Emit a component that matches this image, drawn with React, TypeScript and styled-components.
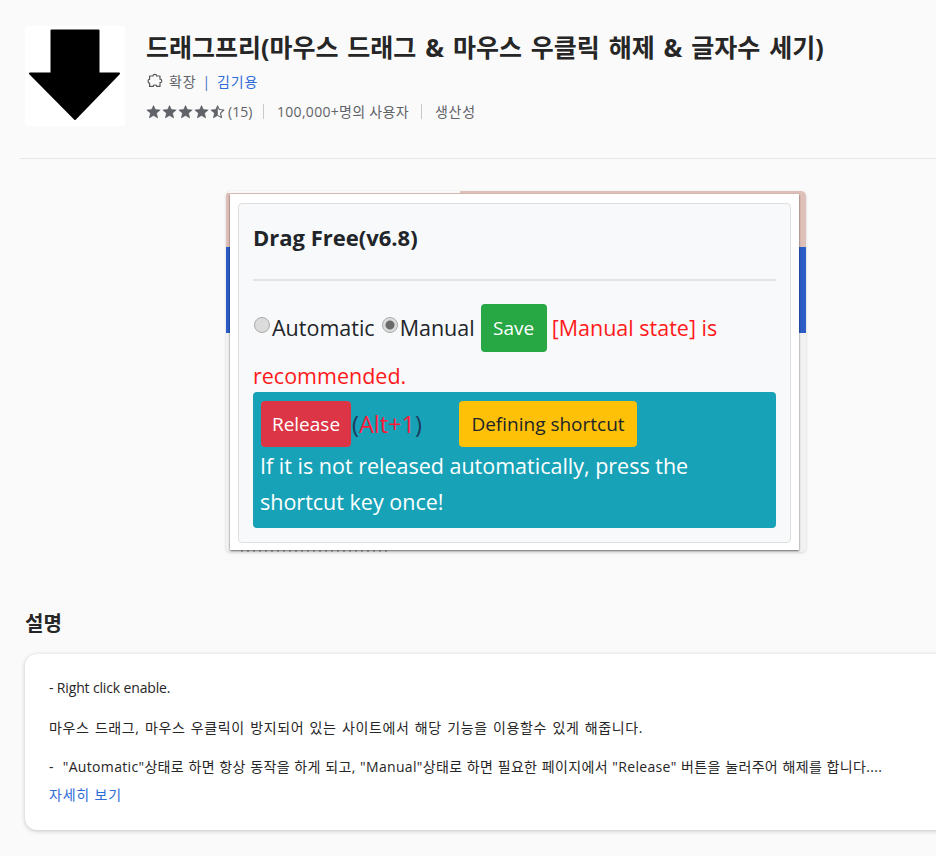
import React from 'react';
import styled, { createGlobalStyle } from 'styled-components';

const Global = createGlobalStyle`
  html, body { margin: 0; padding: 0; background: #fafafa; }
  body { font-family: "Open Sans", "Noto Sans CJK KR", sans-serif; }
`;

const Page = styled.div`
  width: 936px;
  height: 856px;
  overflow: hidden;
  background: #fafafa;
`;

const Header = styled.header`
  margin-left: 20px;
  height: 158px;
  border-bottom: 1px solid #e6e6e6;
  display: flex;
  align-items: flex-start;
  padding-left: 5px;
`;

const Logo = styled.div`
  width: 100px;
  height: 100px;
  margin-top: 26px;
  background: #fff;
  border-radius: 4px;
  flex: none;
`;

const HeaderInfo = styled.div`
  margin-left: 21px;
  display: flex;
  flex-direction: column;
  white-space: nowrap;
`;

const Title = styled.h1`
  margin: 29px 0 0;
  font-size: 25px;
  line-height: 36px;
  font-weight: 700;
  color: #262626;
  font-family: "Open Sans", "Noto Sans CJK KR", sans-serif;
  word-spacing: 2.4px;
`;

const MetaRow = styled.div`
  display: flex;
  align-items: center;
  height: 20px;
  font-size: 14px;
  color: #5f6368;
`;

const TypeRow = styled(MetaRow)`
  margin-top: 6px;
  padding-left: 1px;
  gap: 6px;
`;

const RatingRow = styled(MetaRow)`
  margin-top: 10px;
`;

const KoreanLabel = styled.span`
  letter-spacing: 0.8px;
`;

const Pipe = styled.span`
  color: #3f6fc4;
`;

const Publisher = styled.a`
  color: #2f6bd8;
  margin-left: 1px;
  letter-spacing: 0.8px;
`;

const Stars = styled.div`
  display: flex;
  gap: 1px;
`;

const Count = styled.span`
  margin-left: 3px;
  width: 23px;
`;

const UserCount = styled.span`
  letter-spacing: 0.3px;
`;

const RowDivider = styled.span`
  width: 1px;
  height: 15px;
  background: #c8c8c8;
  margin: 0 13px 0 12px;
`;

const ShotRow = styled.div`
  display: flex;
  justify-content: flex-start;
  padding: 32px 0 0 226px;
`;

const Shot = styled.div`
  width: 580px;
  height: 361px;
  box-sizing: border-box;
  padding: 3px 7px 2px 4px;
  overflow: hidden;
  border-radius: 5px;
  position: relative;
  box-shadow: 0 1px 3px rgba(0, 0, 0, 0.16);
  background: linear-gradient(
    to bottom,
    #dfc0b8 0,
    #dfc0b8 56px,
    #2c5cc5 56px,
    #2c5cc5 142px,
    #f2f2f2 142px
  );
`;

const ShotTopNotch = styled.span`
  position: absolute;
  left: 0;
  top: 0;
  width: 234px;
  height: 2px;
  background: #fafafa;
`;

const ShotBottomResidue = styled.span`
  position: absolute;
  left: 15px;
  bottom: 0;
  width: 147px;
  height: 2px;
  opacity: 0.6;
  background: repeating-linear-gradient(to right, #8a8a8a 0 2px, transparent 2px 6px);
`;

const Popup = styled.div`
  position: relative;
  height: 356px;
  background: #fff;
  padding: 9px 8px 7px 8px;
  box-sizing: border-box;
  box-shadow: 0 1px 2px rgba(0, 0, 0, 0.6);
`;

const PopupCard = styled.div`
  height: 100%;
  box-sizing: border-box;
  background: #f8f9fa;
  border: 1px solid #dfdfdf;
  border-radius: 4px;
  padding: 0 14px;
`;

const PopupTitle = styled.h2`
  margin: 18px 0 0;
  font-size: 22px;
  line-height: 30px;
  font-weight: 700;
  color: #212529;
  font-family: "Open Sans", sans-serif;
`;

const PopupRule = styled.hr`
  margin: 27px 0 0;
  border: 0;
  border-top: 2px solid #e2e3e5;
`;

const PopupBody = styled.div`
  margin-top: 23px;
  font-size: 21.5px;
  line-height: 48px;
  color: #212529;
  white-space: nowrap;
`;

const ModeRow = styled.div`
  display: flex;
  align-items: center;
  height: 48px;
`;

const ModeLabel = styled.span`
  margin-right: 6px;
`;

const Radio = styled.span<{ $on?: boolean }>`
  display: inline-block;
  flex: none;
  width: 16px;
  height: 16px;
  box-sizing: border-box;
  border-radius: 50%;
  border: 1px solid #aaa;
  background: ${(p) =>
    p.$on
      ? 'radial-gradient(circle, #6a6a6a 0 4px, #dcdcdc 5px)'
      : '#dcdcdc'};
  margin: 0 2px 6px 1px;
`;

const PopupButton = styled.span<{ $bg: string; $fg: string; $w: number; $h: number }>`
  display: block;
  flex: none;
  box-sizing: border-box;
  width: ${(p) => p.$w}px;
  height: ${(p) => p.$h}px;
  line-height: ${(p) => p.$h}px;
  text-align: center;
  font-size: 19px;
  border-radius: 4px;
  background: ${(p) => p.$bg};
  color: ${(p) => p.$fg};
`;

const Warning = styled.span`
  color: #ff1a1a;
  margin-left: 5px;
`;

const WarningTail = styled.div`
  color: #ff1a1a;
`;

const Alert = styled.div`
  margin-top: -8px;
  background: #17a2b8;
  border-radius: 4px;
  padding: 9px 7px 7px;
  color: #fff;
  font-size: 21.5px;
  line-height: 36px;
  height: 136px;
  box-sizing: border-box;
  white-space: normal;
`;

const AlertTop = styled.div`
  display: flex;
  align-items: center;
  height: 46px;
  padding-left: 1px;
  font-size: 23.5px;
  color: #1d3a5a;
  margin-bottom: 1px;
`;

const Shortcut = styled.span`
  color: #ff1a3a;
`;

const ShortcutGroup = styled.span`
  margin-left: 1px;
  width: 107px;
  flex: none;
`;

const Section = styled.section`
  margin: 0 0 0 25px;
`;

const SectionTitle = styled.h2`
  margin: 59px 0 0;
  font-size: 20px;
  line-height: 24px;
  font-weight: 700;
  color: #262626;
  font-family: "Noto Sans CJK KR", sans-serif;
`;

const DescCard = styled.div`
  margin-top: 19px;
  width: 1000px;
  height: 176px;
  box-sizing: border-box;
  background: #fff;
  border-radius: 12px;
  box-shadow: 0 1px 4px rgba(0, 0, 0, 0.22);
  padding: 24px;
  font-size: 14px;
  line-height: 20px;
  color: #262626;
`;

const DescLine = styled.p<{ $ls: number; $ws: number }>`
  margin: 0 0 19.5px;
  white-space: pre;
  letter-spacing: ${(p) => p.$ls}px;
  word-spacing: ${(p) => p.$ws}px;
`;

const DescLast = styled(DescLine)`
  margin-bottom: 8px;
`;

const More = styled.a`
  color: #2f6bd8;
  letter-spacing: 0.8px;
`;

const Star = ({ half }: { half?: boolean }) => (
  <svg width="15" height="15" viewBox="0 0 24 24">
    {half ? (
      <>
        <path d="M12 2.5 L12 18.2 L5.4 22.2 L7.2 14.6 L1.3 9.6 L9.1 8.9 Z" fill="#5f6368" stroke="#5f6368" strokeWidth="1" strokeLinejoin="round" />
        <path d="M12 3 L14.9 8.9 L22.2 9.6 L16.8 14.6 L18.4 21.8 L12 18.2" fill="none" stroke="#5f6368" strokeWidth="1.8" strokeLinejoin="round" />
      </>
    ) : (
      <path d="M12 2.5 L14.9 8.9 L22.7 9.6 L16.8 14.6 L18.6 22.2 L12 18.2 L5.4 22.2 L7.2 14.6 L1.3 9.6 L9.1 8.9 Z" fill="#5f6368" stroke="#5f6368" strokeWidth="1" strokeLinejoin="round" />
    )}
  </svg>
);

const ArrowLogo = () => (
  <svg width="100" height="100" viewBox="0 0 100 100">
    <path d="M26.5 4.5 H73.5 V47.5 H94 L50 93 L5 47.5 H26.5 Z" fill="#000" stroke="#000" strokeWidth="2" strokeLinejoin="round" />
  </svg>
);

const PuzzleIcon = () => (
  <svg width="16" height="16" viewBox="0 0 16 16" fill="none" stroke="#555" strokeWidth="1.15" strokeLinejoin="round">
    <path d="M2.6 3 H6.1 C5.6 0.8 10 0.8 9.5 3 H13 V6.2 C15.3 5.7 15.3 10 13 9.5 V13.4 H9.7 C10.1 11.5 5.9 11.5 6.3 13.4 H2.6 V10.1 C0.6 10.6 0.6 5.9 2.6 6.4 Z" />
  </svg>
);

export default function App() {
  return (
    <Page>
      <Global />
      <Header>
        <Logo>
          <ArrowLogo />
        </Logo>
        <HeaderInfo>
          <Title>드래그프리(마우스 드래그 &amp; 마우스 우클릭 해제 &amp; 글자수 세기)</Title>
          <TypeRow>
            <PuzzleIcon />
            <KoreanLabel>확장</KoreanLabel>
            <Pipe>|</Pipe>
            <Publisher>김기용</Publisher>
          </TypeRow>
          <RatingRow>
            <Stars>
              <Star />
              <Star />
              <Star />
              <Star />
              <Star half />
            </Stars>
            <Count>(15)</Count>
            <RowDivider />
            <UserCount>100,000+명의 사용자</UserCount>
            <RowDivider />
            <KoreanLabel>생산성</KoreanLabel>
          </RatingRow>
        </HeaderInfo>
      </Header>
      <ShotRow>
        <Shot>
          <ShotTopNotch />
          <ShotBottomResidue />
          <Popup>
            <PopupCard>
              <PopupTitle>Drag Free(v6.8)</PopupTitle>
              <PopupRule />
              <PopupBody>
                <ModeRow>
                  <Radio />
                  <ModeLabel>Automatic</ModeLabel>
                  <Radio $on />
                  <ModeLabel>Manual</ModeLabel>
                  <PopupButton $bg="#28a745" $fg="#fff" $w={66} $h={48}>Save</PopupButton>
                  <Warning>[Manual state] is</Warning>
                </ModeRow>
                <WarningTail>recommended.</WarningTail>
              </PopupBody>
              <Alert>
                <AlertTop>
                  <PopupButton $bg="#dc3545" $fg="#fff" $w={90} $h={46}>Release</PopupButton>
                  <ShortcutGroup>(<Shortcut>Alt+1</Shortcut>)</ShortcutGroup>
                  <PopupButton $bg="#ffc107" $fg="#212529" $w={178} $h={46}>Defining shortcut</PopupButton>
                </AlertTop>
                If it is not released automatically, press the shortcut key once!
              </Alert>
            </PopupCard>
          </Popup>
        </Shot>
      </ShotRow>
      <Section>
        <SectionTitle>설명</SectionTitle>
        <DescCard>
          <DescLine $ls={-0.15} $ws={0}>- Right click enable.</DescLine>
          <DescLine $ls={0.6} $ws={1.2}>마우스 드래그, 마우스 우클릭이 방지되어 있는 사이트에서 해당 기능을 이용할수 있게 해줍니다.</DescLine>
          <DescLast $ls={0.33} $ws={0.5}>-  "Automatic"상태로 하면 항상 동작을 하게 되고, "Manual"상태로 하면 필요한 페이지에서 "Release" 버튼을 눌러주어 해제를 합니다....</DescLast>
          <More>자세히 보기</More>
        </DescCard>
      </Section>
    </Page>
  );
}
